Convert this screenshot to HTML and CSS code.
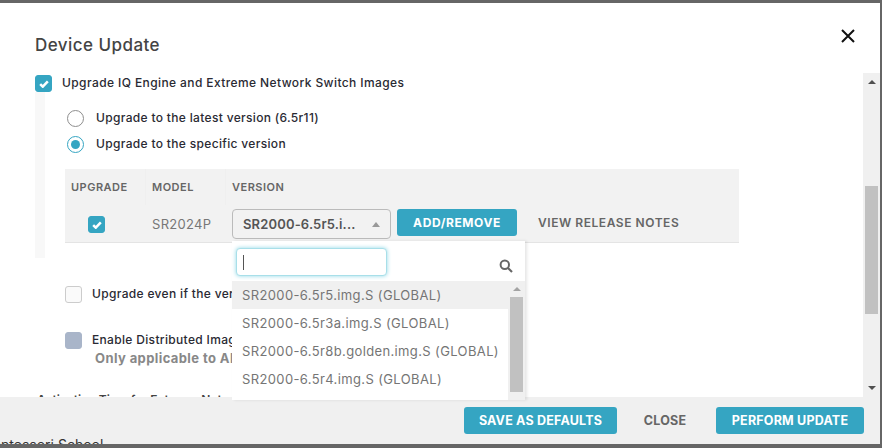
FILE: index.html
```html
<!DOCTYPE html>
<html lang="en">
<head>
<meta charset="utf-8">
<title>Device Update</title>
<link rel="stylesheet" href="styles.css">
</head>
<body>
<div class="dialog">
  <header class="head">
    <h1 class="title">Device Update</h1>
    <svg class="close-x" width="14" height="14" viewBox="0 0 14 14"><path d="M1 1l12 12M13 1L1 13" stroke="#111" stroke-width="2" fill="none"/></svg>
  </header>
  <div class="main">
    <div class="content">
      <div class="row-main">
        <span class="check on"><svg width="10" height="8" viewBox="0 0 11 9"><path d="M1.2 4.6l2.9 2.9 5.7-6" stroke="#fff" stroke-width="2.8" fill="none"/></svg></span>
        <span class="label wide">Upgrade IQ Engine and Extreme Network Switch Images</span>
      </div>
      <div class="nested">
        <div class="radio-row first"><span class="radio"></span><span class="label">Upgrade to the latest version (6.5r11)</span></div>
        <div class="radio-row"><span class="radio sel"><i class="dot"></i></span><span class="label">Upgrade to the specific version</span></div>
        <div class="table">
          <div class="thead">
            <span class="th c1">UPGRADE</span><span class="th c2">MODEL</span><span class="th c3">VERSION</span>
          </div>
          <div class="tbody">
            <span class="c1 cb-cell"><span class="check on"><svg width="10" height="8" viewBox="0 0 11 9"><path d="M1.2 4.6l2.9 2.9 5.7-6" stroke="#fff" stroke-width="2.8" fill="none"/></svg></span></span>
            <span class="c2 model">SR2024P</span>
            <span class="select"><span class="select-text">SR2000-6.5r5.i...</span><i class="caret"></i></span>
            <button class="btn add">ADD/REMOVE</button>
            <span class="link">VIEW RELEASE NOTES</span>
          </div>
        </div>
      </div>
      <div class="opt opt-a"><span class="check"></span><span class="label">Upgrade even if the versions are the same</span></div>
      <div class="opt opt-b"><span class="check dis"></span><span class="label">Enable Distributed Image Download</span></div>
      <div class="hint">Only applicable to AP devices</div>
      <div class="activation">Activation Time for Extreme Network Switches</div>
    </div>
    <div class="scroll">
      <i class="arrow up"></i>
      <i class="thumb"></i>
      <i class="arrow down"></i>
    </div>
  </div>
  <footer class="foot">
    <span class="behind">Montessori School</span>
    <button class="btn save">SAVE AS DEFAULTS</button>
    <span class="close-link">CLOSE</span>
    <button class="btn perform">PERFORM UPDATE</button>
  </footer>
  <div class="drop">
    <div class="search-row">
      <span class="search-input"><i class="cursor"></i></span>
      <svg class="search-icon" width="14" height="14" viewBox="0 0 14 14"><circle cx="5.8" cy="5.8" r="4.2" stroke="#666" stroke-width="2" fill="none"/><path d="M9 9l4 4" stroke="#666" stroke-width="2.2"/></svg>
    </div>
    <div class="list-wrap">
      <ul class="list">
        <li class="item hl">SR2000-6.5r5.img.S (GLOBAL)</li>
        <li class="item">SR2000-6.5r3a.img.S (GLOBAL)</li>
        <li class="item">SR2000-6.5r8b.golden.img.S (GLOBAL)</li>
        <li class="item">SR2000-6.5r4.img.S (GLOBAL)</li>
      </ul>
      <div class="list-scroll"><i class="arrow up light"></i><i class="list-thumb"></i></div>
    </div>
  </div>
</div>
</body>
</html>
```
FILE: styles.css
```css
* { box-sizing: border-box; }
html, body { margin: 0; height: 100%; overflow: hidden; }
body { background: #666; font-family: Inter, "Liberation Sans", sans-serif; color: #222; }
.dialog { position: relative; width: 880px; height: 441px; margin-top: 3px; background: #fff; display: flex; flex-direction: column; overflow: hidden; }
.head { height: 70px; flex: none; display: flex; justify-content: space-between; padding: 26px 25px 0 35px; }
.title { margin: 0; font-size: 17px; line-height: 32px; font-weight: 500; color: #444; letter-spacing: .45px; }
.main { flex: 1; min-height: 0; display: flex; }
.content { flex: 1; min-width: 0; overflow: hidden; padding: 2px 0 0 35px; }
.row-main { display: flex; align-items: center; height: 17px; gap: 10px; }
.check { width: 17px; height: 17px; flex: none; border-radius: 3px; border: 1px solid #ccc; background: #fafafa; display: inline-flex; align-items: center; justify-content: center; }
.check.on { background: #35a5c2; border-color: #35a5c2; }
.check.dis { background: #a9b5c9; border-color: #a9b5c9; }
.label { font-size: 12px; font-weight: 500; color: #2a2a33; letter-spacing: .33px; white-space: nowrap; position: relative; top: -1px; }
.label.wide { letter-spacing: .4px; top: -1.5px; }
.nested { width: 704px; height: 166px; background: linear-gradient(to right, #f8f8f8 10px, #fff 10px); padding: 18px 0 0 32px; position: relative; }
.radio-row { display: flex; align-items: center; height: 17px; gap: 12px; margin-bottom: 9px; }
.radio { width: 17px; height: 17px; border-radius: 50%; border: 1.5px solid #8e8e8e; background: #fff; display: flex; align-items: center; justify-content: center; }
.radio.sel { border-color: #35a5c2; }
.dot { width: 9px; height: 9px; border-radius: 50%; background: #35a5c2; }
.table { width: 674px; margin: 16px 0 0 -2px; background: #f2f2f2; border-bottom: 1px solid #e4e4e4; }
.thead { display: flex; height: 36px; align-items: center; }
.th { font-size: 11px; font-weight: 600; color: #666; letter-spacing: .5px; height: 100%; display: flex; align-items: center; padding-left: 6px; }
.c1 { width: 81px; }
.c2 { width: 80px; }
.th.c1 { border-right: 1px solid #efefef; }
.th.c2 { border-right: 1px solid #efefef; }
.tbody { display: flex; height: 37px; align-items: flex-start; padding-top: 4px; }
.cb-cell { display: flex; justify-content: center; padding-top: 7px; padding-right: 18px; }
.tbody .c2.model { width: 86px; padding-left: 6px; font-size: 13px; color: #777; line-height: 30px; letter-spacing: .3px; }
.select { width: 159px; height: 30px; border: 1px solid #bbb; border-radius: 4px; display: flex; align-items: center; justify-content: space-between; padding: 0 10px; }
.select-text { font-size: 13px; font-weight: 600; color: #555; letter-spacing: .15px; }
.caret { width: 0; height: 0; border: 4px solid transparent; border-top: 0; border-bottom: 5px solid #999; }
.btn { border: 0; border-radius: 3px; background: #35a5c2; color: #fff; font-family: inherit; font-size: 12px; font-weight: 700; letter-spacing: .2px; height: 27px; padding: 0; }
.add { width: 120px; margin-left: 6px; letter-spacing: .6px; }
.link { margin-left: 21px; font-size: 12px; font-weight: 600; color: #666; line-height: 27px; letter-spacing: .55px; }
.opt { display: flex; align-items: center; height: 17px; gap: 10px; margin-left: 30px; }
.opt-a { margin-top: 28px; }
.opt-b { margin-top: 29px; }
.hint { margin: 1px 0 0 60px; font-size: 13px; font-weight: 700; color: #888; letter-spacing: .4px; white-space: nowrap; }
.activation { margin: 26px 0 0 2px; font-size: 12px; font-weight: 600; color: #444; white-space: nowrap; }
.scroll { width: 17px; flex: none; background: #f0f0f0; position: relative; display: flex; flex-direction: column; align-items: center; justify-content: space-between; padding: 7px 0; }
.arrow { width: 0; height: 0; border: 4px solid transparent; display: block; }
.arrow.up { border-top: 0; border-bottom: 4px solid #505050; }
.arrow.down { border-bottom: 0; border-top: 4px solid #505050; }
.arrow.light { border-bottom-color: #a3a3a3; }
.thumb { position: absolute; left: 2px; top: 113px; width: 13px; height: 128px; background: #c1c1c1; }
.foot { height: 47px; flex: none; background: #f0f0f0; display: flex; justify-content: flex-end; align-items: flex-start; padding: 10px 16px 0 0; position: relative; }
.foot .btn { font-size: 12.5px; }
.behind { position: absolute; left: -20px; top: 39px; font-size: 14px; color: #333; white-space: nowrap; }
.save { width: 153px; }
.perform { width: 148px; }
.close-link { width: 99px; padding-right: 3px; text-align: center; font-size: 12.5px; font-weight: 700; color: #666; line-height: 27px; letter-spacing: .2px; }
.drop { position: absolute; left: 232px; top: 238px; width: 293px; height: 159px; background: #fff; box-shadow: 2px 0 3px rgba(0,0,0,.1); display: flex; flex-direction: column; }
.search-row { height: 40px; flex: none; display: flex; align-items: flex-start; justify-content: space-between; padding: 7px 12px 0 4px; }
.search-input { width: 151px; height: 28px; border: 1px solid #a8dfe9; border-radius: 4px; box-shadow: 0 0 4px #8fd8e6; display: flex; align-items: center; padding-left: 6px; background: #fff; }
.cursor { width: 1px; height: 15px; background: #555; }
.search-icon { margin-top: 11px; }
.list-wrap { flex: 1; min-height: 0; display: flex; overflow: hidden; }
.list { list-style: none; margin: 0; padding: 0; flex: 1; }
.item { height: 28px; line-height: 29px; padding-left: 10px; font-size: 13px; color: #757575; letter-spacing: .37px; white-space: nowrap; }
.item.hl { background: #f0f0f0; }
.list-scroll { width: 17px; flex: none; background: #f0f0f0; display: flex; flex-direction: column; align-items: center; padding-top: 6px; }
.list-thumb { display: block; width: 13px; height: 95px; margin-top: 6px; background: #c1c1c1; }
```
